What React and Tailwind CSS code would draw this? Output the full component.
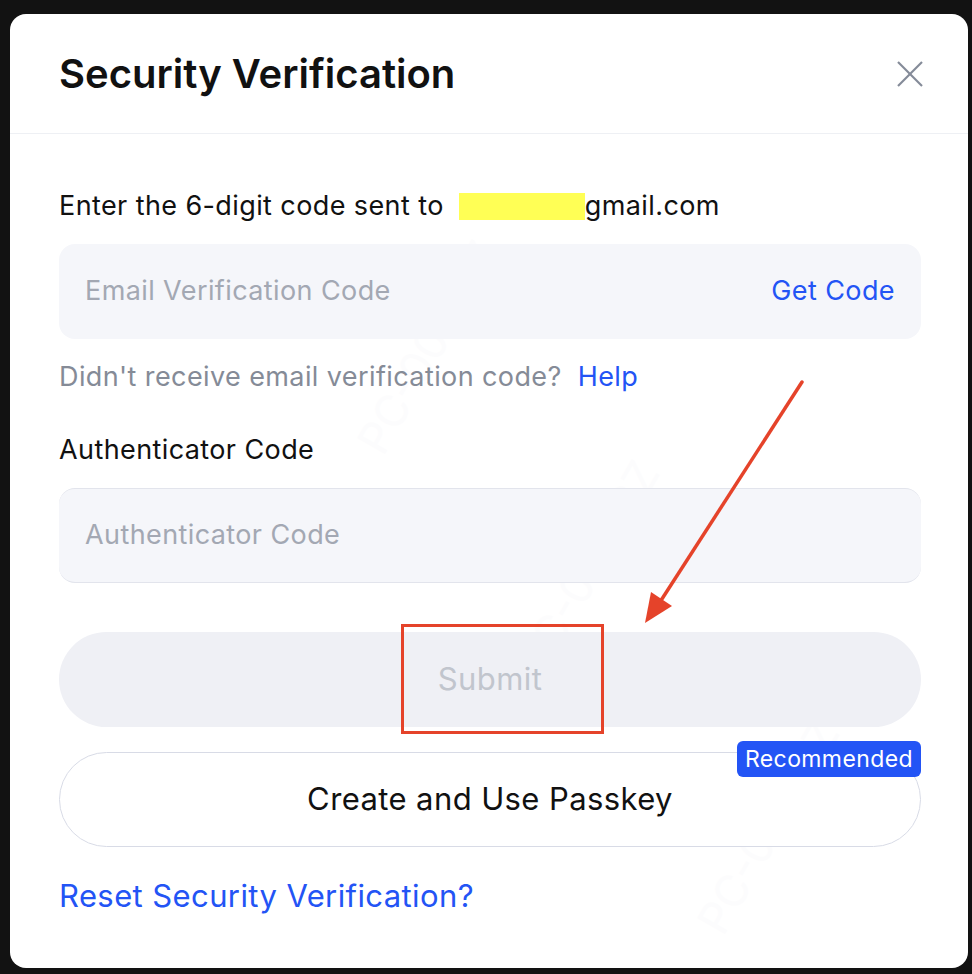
import React from 'react';

const font = { fontFamily: 'Inter, "Noto Sans", sans-serif' };

const Watermarks = () => {
    const marks = [[300, 300], [460, 520], [640, 780]];
    return (
        <div className="pointer-events-none absolute inset-0 overflow-hidden">
            {marks.map(([x, y], i) => (
                <div
                    key={i}
                    className="absolute text-[44px] text-[#fcfcfd] -rotate-[60deg] whitespace-nowrap"
                    style={{ left: x, top: y }}
                >
                    PC-00196Z
                </div>
            ))}
        </div>
    );
};

const Annotation = () => (
    <svg className="pointer-events-none absolute inset-0" width="972" height="974" viewBox="0 0 972 974">
        <rect x="402.5" y="625.5" width="200" height="107" fill="none" stroke="#e5432a" strokeWidth="3" />
        <line x1="802" y1="382" x2="660" y2="602" stroke="#e5432a" strokeWidth="3.5" strokeLinecap="round" />
        <polygon points="645,623 651,592 672,606" fill="#e5432a" />
    </svg>
);

export default function App() {
    return (
        <div className="relative h-[974px] w-[972px] bg-[#121212] pl-[10px] pt-[14px]" style={font}>
            <div className="relative h-[954px] w-[958px] overflow-hidden rounded-[16px] bg-white">
                <Watermarks />
                <div className="relative">
                    <div className="flex h-[120px] items-center justify-between border-b border-[#eef0f4] pl-[49px] pr-[40px]">
                        <h1 className="text-[40px] font-semibold text-[#111]">Security Verification</h1>
                        <button className="flex h-[36px] w-[36px] items-center justify-center text-[#848b98]">
                            <svg width="30" height="30" viewBox="0 0 30 30" fill="none" stroke="currentColor" strokeWidth="2.2">
                                <line x1="3" y1="3" x2="27" y2="27" />
                                <line x1="27" y1="3" x2="3" y2="27" />
                            </svg>
                        </button>
                    </div>

                    <div className="flex flex-col pl-[49px] pr-[47px] pt-[56px] tracking-[0.4px]">
                        <div className="flex h-[32px] items-center text-[27px] text-[#111]">
                            <span>Enter the 6-digit code sent to</span>
                            <span className="ml-[15px] inline-block h-[27px] w-[126px] bg-[#ffff55]" />
                            <span>gmail.com</span>
                        </div>

                        <div className="mt-[22px] flex h-[95px] items-center justify-between rounded-[16px] bg-[#f5f6fa] px-[26px]">
                            <span className="text-[27px] text-[#a3a8b3]">Email Verification Code</span>
                            <span className="text-[27px] text-[#2354f5]">Get Code</span>
                        </div>

                        <div className="mt-[22px] flex h-[32px] items-center text-[27px]">
                            <span className="text-[#858b97]">Didn't receive email verification code?</span>
                            <span className="ml-[16px] text-[#2354f5]">Help</span>
                        </div>

                        <div className="mt-[41px] flex h-[32px] items-center text-[27px] text-[#111]">Authenticator Code</div>

                        <div className="mt-[22px] flex h-[95px] items-center rounded-[16px] border-y border-[#e2e4ec] bg-[#f5f6fa] px-[26px]">
                            <span className="text-[27px] text-[#a3a8b3]">Authenticator Code</span>
                        </div>

                        <button className="mt-[49px] flex h-[95px] items-center justify-center rounded-full bg-[#eff0f5] text-[31px] text-[#c1c5cd]">
                            Submit
                        </button>

                        <div className="relative mt-[25px]">
                            <button className="flex h-[95px] w-full items-center justify-center rounded-full border-[1.5px] border-[#d8dbe6] bg-white text-[31px] text-[#111]">
                                Create and Use Passkey
                            </button>
                            <span className="absolute right-0 top-[-11px] flex h-[36px] items-center rounded-[6px] bg-[#2354f5] px-[8px] text-[23px] text-white">
                                Recommended
                            </span>
                        </div>

                        <div className="mt-[33px] flex h-[32px] items-center text-[31px] text-[#2354f5]">Reset Security Verification?</div>
                    </div>
                </div>
            </div>
            <Annotation />
        </div>
    );
}
